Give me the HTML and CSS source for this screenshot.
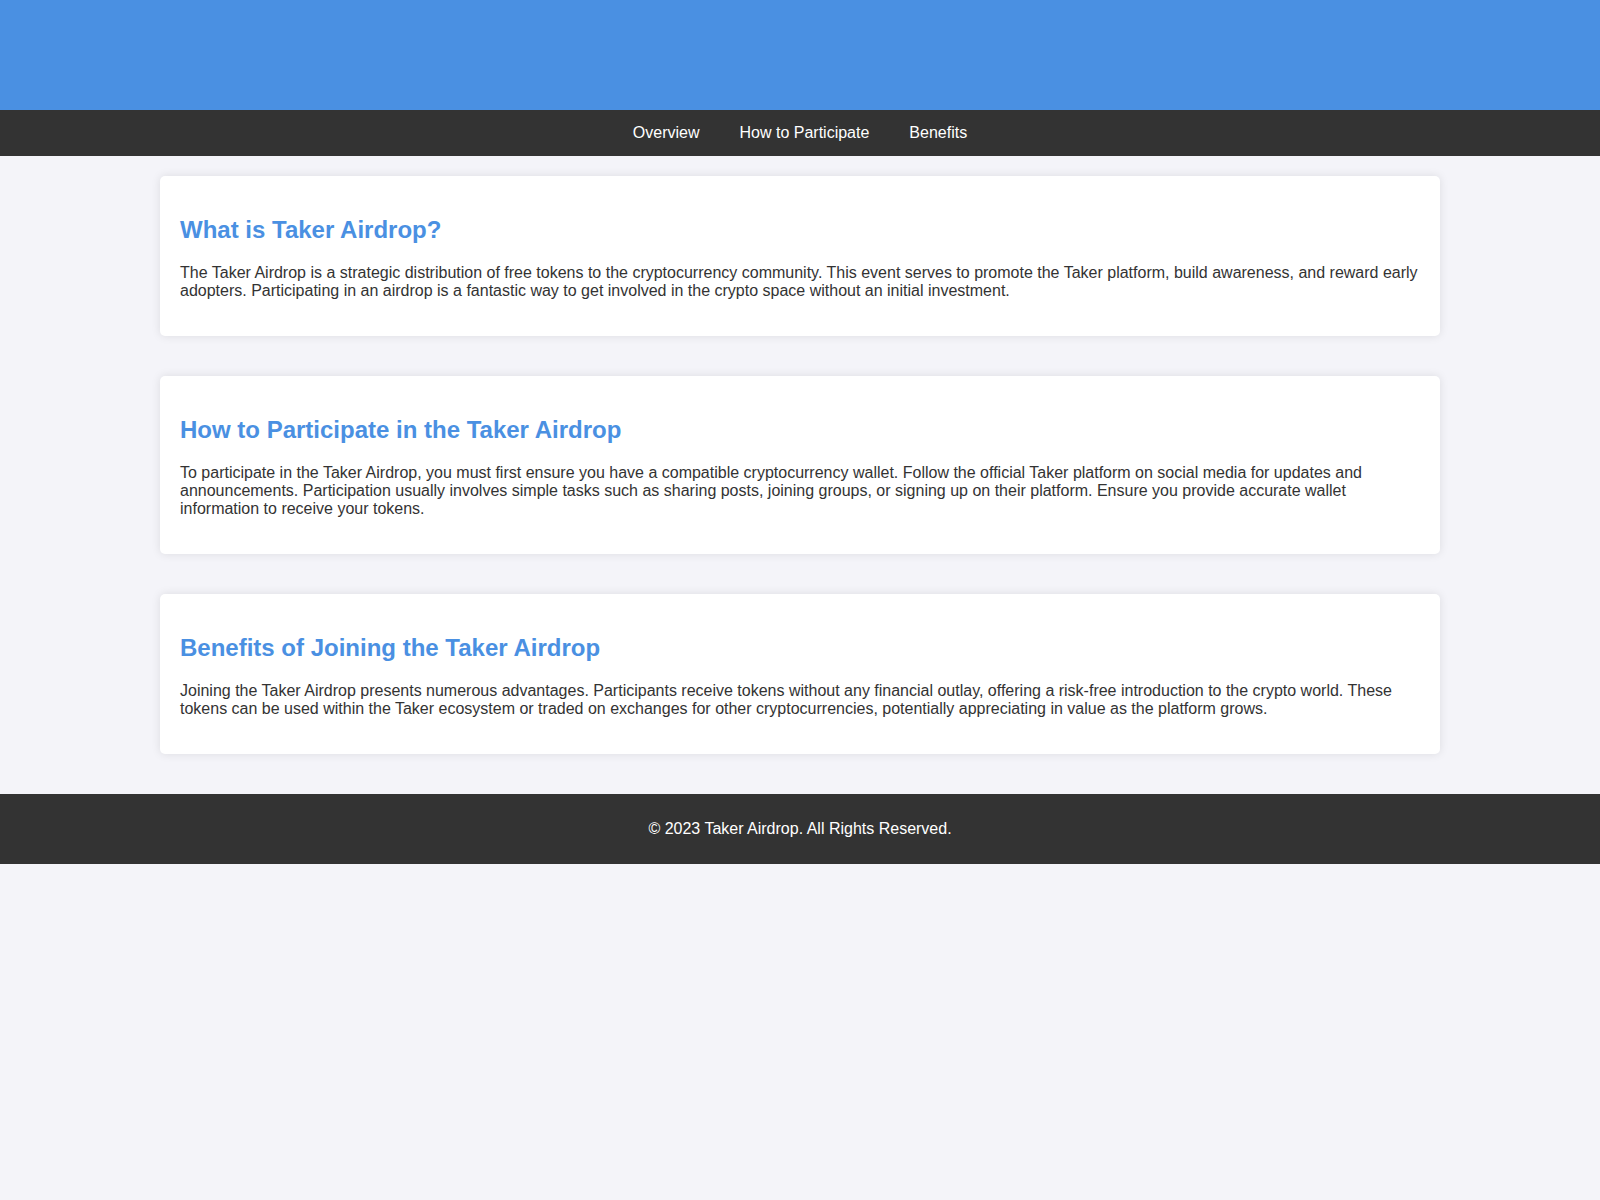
FILE: index.html
```html
<!DOCTYPE html>
<html lang="en">
<head>
<meta charset="UTF-8">
<title>Taker Airdrop</title>
<link rel="stylesheet" href="styles.css">
</head>
<body>
<header class="site-header"></header>
<nav class="site-nav">
  <a href="#overview">Overview</a>
  <a href="#participate">How to Participate</a>
  <a href="#benefits">Benefits</a>
</nav>
<main class="content">
  <section class="card" id="overview">
    <h2>What is Taker Airdrop?</h2>
    <p>The Taker Airdrop is a strategic distribution of free tokens to the cryptocurrency community. This event serves to promote the Taker platform, build awareness, and reward early adopters. Participating in an airdrop is a fantastic way to get involved in the crypto space without an initial investment.</p>
  </section>
  <section class="card" id="participate">
    <h2>How to Participate in the Taker Airdrop</h2>
    <p>To participate in the Taker Airdrop, you must first ensure you have a compatible cryptocurrency wallet. Follow the official Taker platform on social media for updates and announcements. Participation usually involves simple tasks such as sharing posts, joining groups, or signing up on their platform. Ensure you provide accurate wallet information to receive your tokens.</p>
  </section>
  <section class="card" id="benefits">
    <h2>Benefits of Joining the Taker Airdrop</h2>
    <p>Joining the Taker Airdrop presents numerous advantages. Participants receive tokens without any financial outlay, offering a risk-free introduction to the crypto world. These tokens can be used within the Taker ecosystem or traded on exchanges for other cryptocurrencies, potentially appreciating in value as the platform grows.</p>
  </section>
</main>
<footer class="site-footer">
  <p>&copy; 2023 Taker Airdrop. All Rights Reserved.</p>
</footer>
</body>
</html>
```

FILE: styles.css
```css
body {
  margin: 0;
  font-family: "Liberation Sans", Arial, sans-serif;
  background: #f4f4f9;
  color: #333;
}

.site-header {
  background: #4a90e2;
  height: 110px;
}

.site-nav {
  background: #333;
  display: flex;
  justify-content: center;
  padding: 14px 0;
  line-height: 18px;
}

.site-nav a {
  color: #fff;
  text-decoration: none;
  margin: 0 20px;
  font-size: 16px;
}

.content {
  width: 1280px;
  margin: 0 auto;
  padding: 20px 0 40px;
  display: flex;
  flex-direction: column;
  gap: 40px;
}

.card {
  background: #fff;
  border-radius: 5px;
  box-shadow: 0 0 10px rgba(0, 0, 0, 0.1);
  padding: 20px;
}

.card h2 {
  color: #4a90e2;
  font-size: 24px;
  margin: 20px 0;
}

.card p {
  font-size: 16px;
  line-height: 18px;
  margin: 16px 0;
}

.site-footer {
  background: #333;
  color: #fff;
  text-align: center;
  padding: 10px 0;
}

.site-footer p {
  margin: 16px 0;
}
```
